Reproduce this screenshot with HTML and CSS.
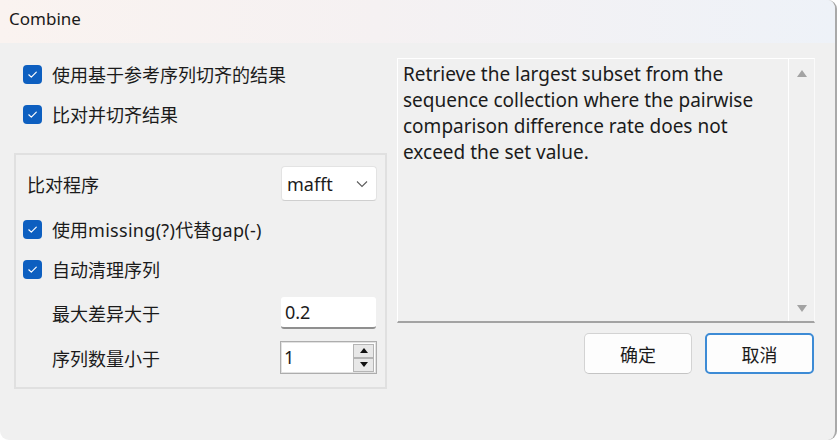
FILE: index.html
```html
<!DOCTYPE html>
<html lang="zh-CN">
<head>
<meta charset="utf-8">
<title>Combine</title>
<link rel="stylesheet" href="styles.css">
</head>
<body>
<div class="window">
  <div class="titlebar">Combine</div>
  <div class="content">
    <div class="left">
      <label class="check-row"><span class="cb"><svg viewBox="0 0 19 19"><path d="M5.8 9.8 L8.3 12.1 L13.3 7.1" /></svg></span><span class="lbl">使用基于参考序列切齐的结果</span></label>
      <label class="check-row"><span class="cb"><svg viewBox="0 0 19 19"><path d="M5.8 9.8 L8.3 12.1 L13.3 7.1" /></svg></span><span class="lbl">比对并切齐结果</span></label>
      <div class="group">
        <div class="field-row first">
          <span class="lbl plain">比对程序</span>
          <div class="combo"><span>mafft</span><svg class="chev" viewBox="0 0 12 8"><path d="M1 1.5 L6 6.5 L11 1.5"/></svg></div>
        </div>
        <label class="check-row"><span class="cb"><svg viewBox="0 0 19 19"><path d="M5.8 9.8 L8.3 12.1 L13.3 7.1" /></svg></span><span class="lbl">使用<span class="latin">missing(?)</span>代替<span class="latin">gap(-)</span></span></label>
        <label class="check-row"><span class="cb"><svg viewBox="0 0 19 19"><path d="M5.8 9.8 L8.3 12.1 L13.3 7.1" /></svg></span><span class="lbl">自动清理序列</span></label>
        <div class="field-row input-row">
          <span class="lbl indent">最大差异大于</span>
          <div class="lineedit">0.2</div>
        </div>
        <div class="field-row spin-row">
          <span class="lbl indent">序列数量小于</span>
          <div class="spin">
            <span class="spin-val">1</span>
            <div class="spin-btns">
              <span class="sbtn"><svg viewBox="0 0 8 5"><path d="M0 5 L4 0 L8 5 Z"/></svg></span>
              <span class="sbtn"><svg viewBox="0 0 8 5"><path d="M0 0 L8 0 L4 5 Z"/></svg></span>
            </div>
          </div>
        </div>
      </div>
    </div>
    <div class="right">
      <div class="textbox">
        <div class="text">Retrieve the largest subset from the sequence collection where the pairwise comparison difference rate does not exceed the set value.</div>
        <div class="vscroll">
          <svg class="arrow" viewBox="0 0 10 7"><path d="M0 7 L5 0 L10 7 Z"/></svg>
          <svg class="arrow" viewBox="0 0 10 7"><path d="M0 0 L10 0 L5 7 Z"/></svg>
        </div>
      </div>
      <div class="buttons">
        <button class="btn">确定</button>
        <button class="btn default">取消</button>
      </div>
    </div>
  </div>
</div>
</body>
</html>
```
FILE: styles.css
```css
* { box-sizing: border-box; }
html, body { margin: 0; padding: 0; background: #ffffff; }
body {
  font-family: "Noto Sans", "Noto Sans CJK SC", sans-serif;
  font-size: 18px;
  color: #1b1b1b;
}
.window {
  width: 837px;
  height: 440px;
  background: #f0f0f0;
  border-right: 2px solid #a9a9a9;
  border-radius: 0 9px 9px 9px;
  overflow: hidden;
  display: flex;
  flex-direction: column;
}
.titlebar {
  height: 43px;
  flex: none;
  padding-left: 9px;
  line-height: 38px;
  font-size: 17px;
  color: #1a1a1a;
  background: linear-gradient(90deg, #faf3f0 0%, #f5f1f2 45%, #eef2f8 100%);
}
.content {
  flex: 1;
  display: flex;
  padding-left: 14px;
}
.left {
  width: 373px;
  padding-top: 11px;
  display: flex;
  flex-direction: column;
}
.check-row {
  height: 40px;
  display: flex;
  align-items: center;
  padding-left: 9px;
}
.cb {
  width: 19px;
  height: 19px;
  border-radius: 4px;
  background: #0d5fc0;
  flex: none;
  display: flex;
}
.cb svg { width: 19px; height: 19px; }
.cb path { fill: none; stroke: #ffffff; stroke-width: 1.2; stroke-linecap: round; stroke-linejoin: round; }
.lbl { margin-left: 10px; white-space: nowrap; }
.latin { letter-spacing: 0.3px; }
.group {
  margin-top: 19px;
  height: 236px;
  border: 2px solid #e0e0e0;
  padding: 11px 8px 0 7px;
  display: flex;
  flex-direction: column;
}
.group .check-row { padding-left: 0; }
.field-row {
  display: flex;
  align-items: center;
  justify-content: space-between;
}
.field-row.first { height: 35px; margin-bottom: 8px; }
.lbl.plain { margin-left: 4px; }
.lbl.indent { margin-left: 29px; }
.combo {
  width: 96px;
  height: 35px;
  background: #ffffff;
  border: 1px solid #e3e3e3;
  border-bottom-color: #cfcfcf;
  border-radius: 4px;
  display: flex;
  align-items: center;
  justify-content: space-between;
  padding: 0 8px 0 5px;
}
.chev { width: 12px; height: 8px; }
.chev path { fill: none; stroke: #5c5c5c; stroke-width: 1.1; }
.input-row { height: 32px; margin-top: 8px; }
.lineedit {
  width: 95px;
  height: 32px;
  background: #ffffff;
  border-radius: 3px;
  border-bottom: 2px solid #8f8f8f;
  padding-left: 4px;
  line-height: 30px;
  margin-right: 1px;
}
.spin-row { height: 33px; margin-top: 12px; }
.spin {
  width: 97px;
  height: 33px;
  background: #ffffff;
  border: 1px solid #adadad;
  box-shadow: inset 0 0 0 1px #e2e2e2;
  display: flex;
  align-items: center;
  justify-content: space-between;
  padding: 0 2px 0 3px;
}
.spin-val { line-height: 31px; }
.spin-btns {
  display: flex;
  flex-direction: column;
  width: 21px;
  height: 28px;
}
.sbtn {
  flex: 1;
  background: #e8e8e8;
  border: 1px solid #b5b5b5;
  display: flex;
  align-items: center;
  justify-content: center;
}
.sbtn svg { width: 8px; height: 5px; }
.sbtn path { fill: #111111; }
.right {
  margin-left: 10px;
  width: 418px;
  padding-top: 15px;
  display: flex;
  flex-direction: column;
}
.textbox {
  height: 265px;
  border-top: 1px solid #ffffff;
  border-left: 1px solid #ffffff;
  border-right: 1px solid #fafafa;
  border-bottom: 2px solid #a3a3a3;
  display: flex;
}
.text {
  flex: 1;
  padding: 2px 6px 0 5px;
  line-height: 26px;
  font-size: 19px;
}
.vscroll {
  width: 26px;
  border-left: 1px solid #ffffff;
  display: flex;
  flex-direction: column;
  justify-content: space-between;
  align-items: center;
  padding: 11px 0 9px;
}
.arrow { width: 10px; height: 7px; }
.arrow path { fill: #a3a3a3; }
.buttons {
  display: flex;
  justify-content: flex-end;
  gap: 13px;
  margin-top: 10px;
  padding-right: 1px;
}
.btn {
  font-family: inherit;
  font-size: 18px;
  color: #1b1b1b;
  width: 108px;
  height: 41px;
  background: #fdfdfd;
  border: 1px solid #d3d3d3;
  border-bottom-color: #c4c4c4;
  border-radius: 5px;
  padding: 0;
}
.btn.default {
  width: 109px;
  border: 2px solid #3d8bd5;
}
```
